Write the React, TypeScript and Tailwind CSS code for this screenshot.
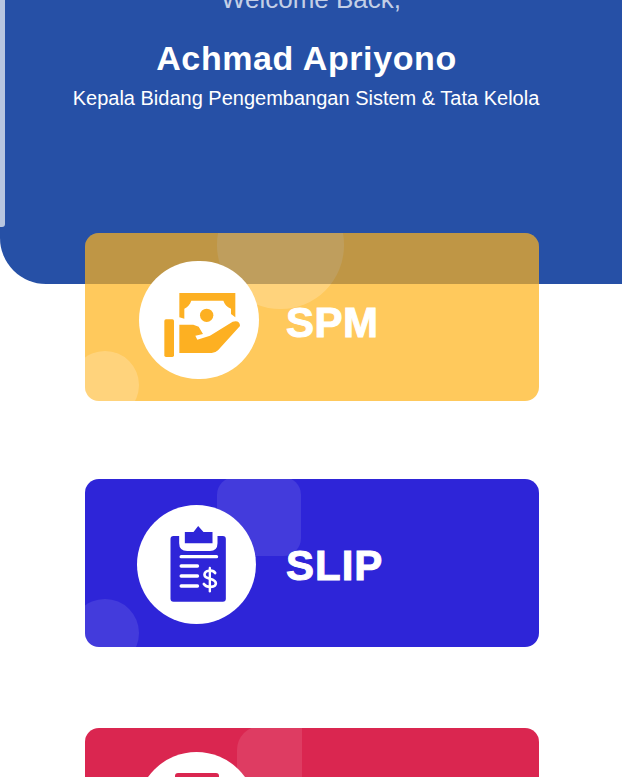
import React from 'react';

const MoneyHandIcon: React.FC = () => (
  <svg viewBox="27 18 360 352" className="w-full h-full" fill="#fdb022">
    <rect x="103" y="192" width="29" height="113" rx="5" />
    <path d="M148 113H316V186L303 176V160C290 155 284 146 280 136H184C180 148 172 156 163 160V190L148 186Z" />
    <circle cx="230" cy="180" r="20" />
    <path d="M148 208H190L206 214L219 236L196 241L202 253L240 241L308 199Q330 194 330 212L264 285Q256 293 245 293H148Z" />
  </svg>
);

const ClipboardIcon: React.FC = () => (
  <svg viewBox="22 15 356 357" className="w-full h-full">
    <rect x="122" y="108" width="166" height="197" rx="9" fill="#2e25d8" />
    <path d="M155 104V130Q155 146 172 146H240Q256 146 256 130V104" fill="white" stroke="white" strokeWidth="14" />
    <path d="M165 96H191L205 78L221 96H248V130H165Z" fill="#2e25d8" />
    <g stroke="white" strokeWidth="10" strokeLinecap="round" fill="none">
      <path d="M154 170H260" />
      <path d="M154 198H203" />
      <path d="M154 228H203" />
      <path d="M154 258H203" />
      <path d="M256 219C250 208 224 210 224 224C224 240 258 232 258 250C258 264 230 264 222 252" strokeWidth="8" />
      <path d="M240 204V274" strokeWidth="7" />
    </g>
  </svg>
);

const App: React.FC = () => {
  return (
    <div className="h-[777px] overflow-hidden bg-white font-['Liberation_Sans',Arial,sans-serif]">
      {/* Header */}
      <div className="relative h-[284px] bg-[#2650a6] rounded-bl-[46px] flex flex-col items-center overflow-hidden">
        <div className="absolute left-0 top-0 w-[5px] h-[227px] bg-[#b8c6e0] rounded-br-[3px]" />
        <p className="-mt-[16px] text-[26px] leading-[30px] text-[#c3cfe6]">Welcome Back,</p>
        <h1 className="mt-[24px] pr-[9px] text-[34px] leading-[40px] font-bold tracking-[0.6px] text-white">Achmad Apriyono</h1>
        <p className="mt-[8px] pr-[10px] text-[20px] leading-[24px] text-white">Kepala Bidang Pengembangan Sistem &amp; Tata Kelola</p>
      </div>

      {/* Menu cards */}
      <div className="-mt-[51px] ml-[85px] w-[454px] flex flex-col">
        <div className="relative h-[168px] rounded-[14px] bg-[#ffc95c] overflow-hidden pl-[54px] pt-[28px] flex items-start">
          <div className="absolute left-[132px] -top-[52px] w-[127px] h-[128px] rounded-full bg-white/20" />
          <div className="absolute -left-[14px] top-[118px] w-[68px] h-[68px] rounded-full bg-white/20" />
          <div className="absolute left-0 right-0 top-0 h-[51px] bg-black/25" />
          <div className="relative w-[120px] h-[118px] rounded-full bg-white shrink-0">
            <MoneyHandIcon />
          </div>
          <span className="relative ml-[27px] mt-[38px] text-[42px] leading-[48px] font-bold tracking-[0.5px] text-white [-webkit-text-stroke:1px_white]">SPM</span>
        </div>

        <div className="relative mt-[78px] h-[168px] rounded-[14px] bg-[#2e25d8] overflow-hidden pl-[52px] pt-[26px] flex items-start">
          <div className="absolute left-[132px] -top-[2px] w-[84px] h-[79px] rounded-[18px] bg-white/10" />
          <div className="absolute -left-[14px] top-[120px] w-[68px] h-[68px] rounded-full bg-white/10" />
          <div className="relative w-[119px] h-[119px] rounded-full bg-white shrink-0">
            <ClipboardIcon />
          </div>
          <span className="relative ml-[30px] mt-[37px] text-[42px] leading-[48px] font-bold tracking-[1px] text-white [-webkit-text-stroke:1px_white]">SLIP</span>
        </div>

        <div className="relative mt-[81px] h-[168px] rounded-[14px] bg-[#da2650] overflow-hidden pl-[52px] pt-[24px] flex items-start">
          <div className="absolute left-[152px] -top-[2px] w-[65px] h-[79px] rounded-l-[24px] bg-white/10" />
          <div className="relative w-[119px] h-[119px] rounded-full bg-white shrink-0 flex justify-center">
            <div className="mt-[21px] w-[44px] h-[20px] rounded-t-[3px] bg-[#da2650]" />
          </div>
        </div>
      </div>
    </div>
  );
};

export default App;
